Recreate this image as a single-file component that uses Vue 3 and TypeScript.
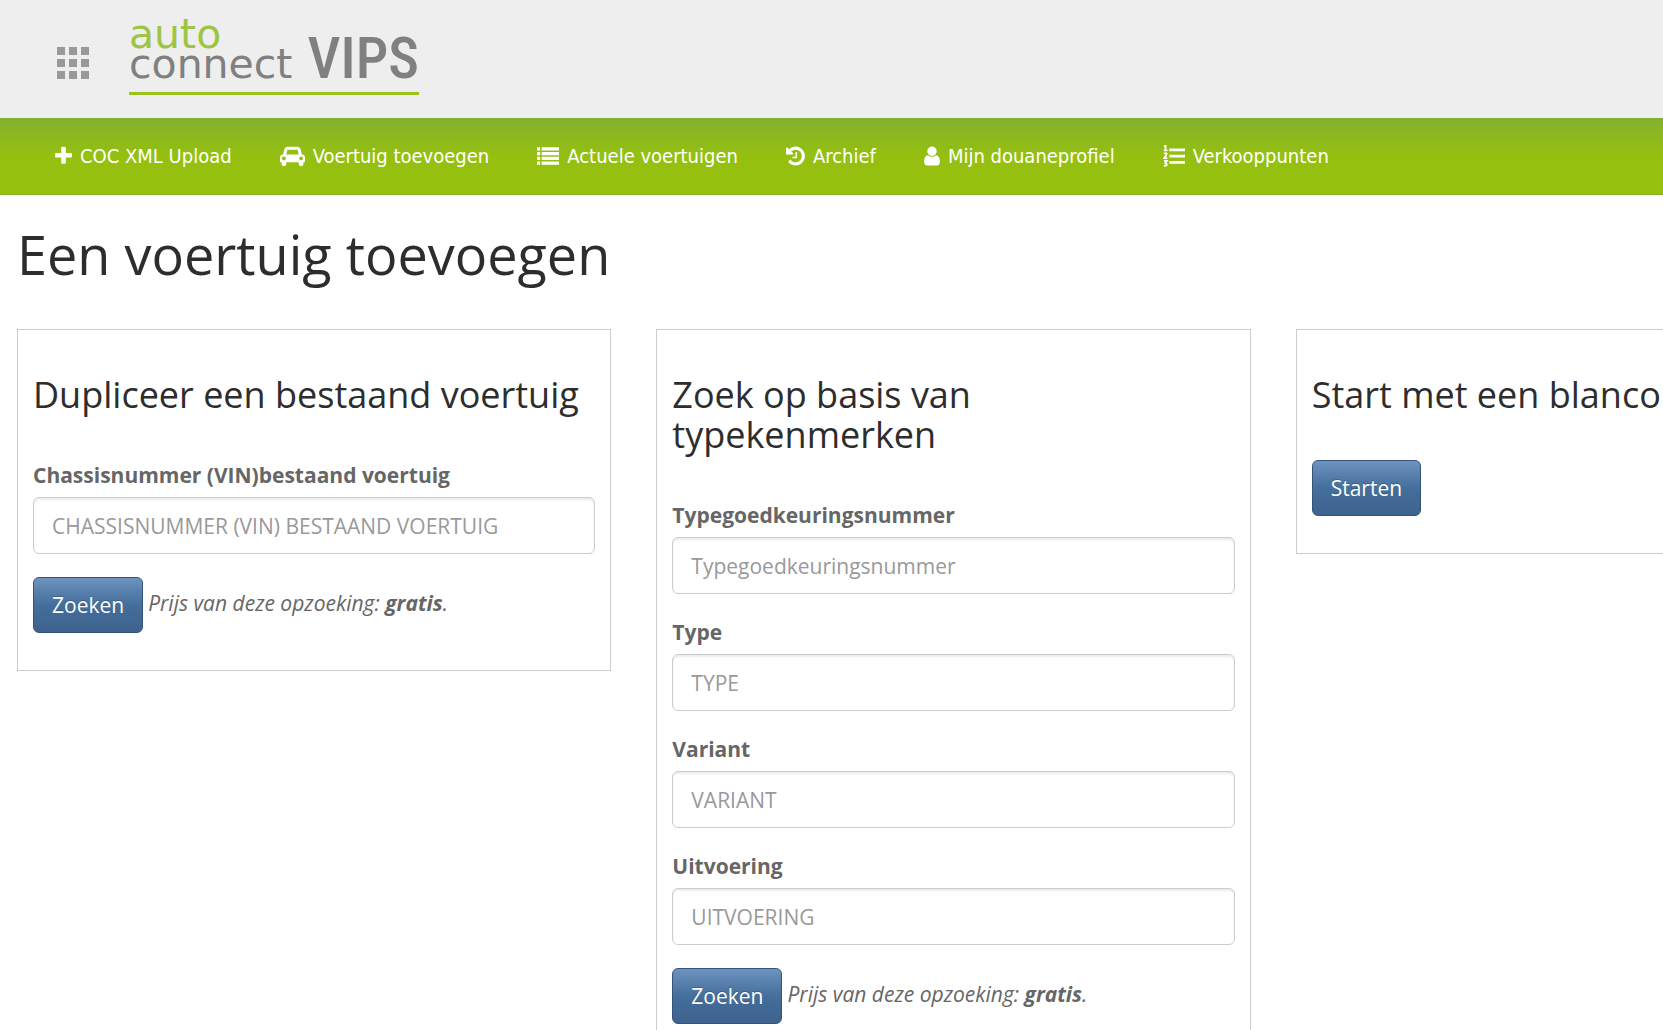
<script setup lang="ts">
import { ref } from 'vue'

interface NavItem {
  label: string
  icon: string
  width: number
  path: string
  outline?: string
}

interface Field {
  id: string
  label: string
  placeholder: string
}

const navItems: NavItem[] = [
  {
    label: 'COC XML Upload',
    icon: '192 0 1408 1792',
    width: 17,
    path: 'M1600 736v192q0 40-28 68t-68 28h-416v416q0 40-28 68t-68 28h-192q-40 0-68-28t-28-68v-416h-416q-40 0-68-28t-28-68v-192q0-40 28-68t68-28h416v-416q0-40 28-68t68-28h192q40 0 68 28t28 68v416h416q40 0 68 28t28 68z',
  },
  {
    label: 'Voertuig toevoegen',
    icon: '0 0 2048 1792',
    width: 25,
    path: 'M480 1088q0-66-47-113t-113-47-113 47-47 113 47 113 113 47 113-47 47-113zm36-320h1016l-89-357q-2-8-14-17.5t-21-9.5h-768q-9 0-21 9.5t-14 17.5zm1372 320q0-66-47-113t-113-47-113 47-47 113 47 113 113 47 113-47 47-113zm160-96v384q0 14-9 23t-23 9h-96v128q0 80-56 136t-136 56-136-56-56-136v-128h-1024v128q0 80-56 136t-136 56-136-56-56-136v-128h-96q-14 0-23-9t-9-23v-384q0-93 65.5-158.5t158.5-65.5h28l105-419q23-94 104-157.5t179-63.5h768q98 0 179 63.5t104 157.5l105 419h28q93 0 158.5 65.5t65.5 158.5z',
  },
  {
    label: 'Actuele voertuigen',
    icon: '0 0 1792 1792',
    width: 22,
    path: 'M0 192h256v256H0zM384 192h1408v256H384zM0 576h256v256H0zM384 576h1408v256H384zM0 960h256v256H0zM384 960h1408v256H384zM0 1344h256v256H0zM384 1344h1408v256H384z',
  },
  {
    label: 'Archief',
    icon: '128 0 1536 1792',
    width: 19,
    path: 'M1664 896q0 156-61 298t-164 245-245 164-298 61q-172 0-327-72.5t-264-204.5q-7-10-6.5-22.5t8.5-20.5l137-138q10-9 25-9 16 2 23 12 73 95 179 147t225 52q104 0 198.5-40.5t163.5-109.5 109.5-163.5 40.5-198.5-40.5-198.5-109.5-163.5-163.5-109.5-198.5-40.5q-98 0-188 35.5t-160 101.5l137 138q31 30 14 69-17 40-59 40h-448q-26 0-45-19t-19-45v-448q0-42 40-59 39-17 69 14l130 129q107-101 244.5-156.5t284.5-55.5q156 0 298 61t245 164 164 245 61 298zm-640-288v448q0 14-9 23t-23 9h-320q-14 0-23-9t-9-23v-64q0-14 9-23t23-9h224v-352q0-14 9-23t23-9h64q14 0 23 9t9 23z',
  },
  {
    label: 'Mijn douaneprofiel',
    icon: '256 0 1280 1792',
    width: 16,
    path: 'M1536 1399q0 109-62.5 187t-150.5 78h-854q-88 0-150.5-78t-62.5-187q0-85 8.5-160.5t31.5-152 58.5-131 94-89 134.5-34.5q131 128 313 128t313-128q76 0 134.5 34.5t94 89 58.5 131 31.5 152 8.5 160.5zm-256-887q0 159-112.5 271.5t-271.5 112.5-271.5-112.5-112.5-271.5 112.5-271.5 271.5-112.5 271.5 112.5 112.5 271.5z',
  },
  {
    label: 'Verkooppunten',
    icon: '0 0 1792 1792',
    width: 22,
    path: 'M512 288h1280v224H512zM512 800h1280v224H512zM512 1312h1280v224H512z',
    outline: 'M80 140L210 60V430M60 430H360M80 730Q200 610 300 700Q320 800 90 1070H350M80 1300H310L190 1450Q330 1480 310 1610Q240 1740 70 1660',
  },
]

const typeFields: Field[] = [
  { id: 'approval', label: 'Typegoedkeuringsnummer', placeholder: 'Typegoedkeuringsnummer' },
  { id: 'type', label: 'Type', placeholder: 'TYPE' },
  { id: 'variant', label: 'Variant', placeholder: 'VARIANT' },
  { id: 'version', label: 'Uitvoering', placeholder: 'UITVOERING' },
]

const vin = ref('')
const typeValues = ref<Record<string, string>>({})
</script>

<template>
  <header class="brand-bar">
    <button class="apps" type="button" aria-label="Apps">
      <span v-for="n in 9" :key="n" class="dot"></span>
    </button>
    <a class="logo" href="#">
      <span class="logo-name">
        <span class="logo-auto">auto</span>
        <span class="logo-connect">connect</span>
      </span>
      <span class="logo-product">VIPS</span>
    </a>
  </header>

  <nav class="nav">
    <a v-for="item in navItems" :key="item.label" class="nav-link" href="#">
      <svg :viewBox="item.icon" :width="item.width" height="22" fill="currentColor" aria-hidden="true">
        <path :d="item.path" />
        <path v-if="item.outline" :d="item.outline" fill="none" stroke="currentColor" stroke-width="140" />
      </svg>
      <span>{{ item.label }}</span>
    </a>
  </nav>

  <main class="page">
    <h1>Een voertuig toevoegen</h1>
    <div class="columns">
      <form class="panel" @submit.prevent>
        <h3>Dupliceer een bestaand voertuig</h3>
        <div class="field">
          <label for="vin">Chassisnummer (VIN)bestaand voertuig</label>
          <input id="vin" v-model="vin" type="text" placeholder="CHASSISNUMMER (VIN) BESTAAND VOERTUIG" />
        </div>
        <div class="actions">
          <button class="btn" type="submit">Zoeken</button>
          <em>Prijs van deze opzoeking: <strong>gratis</strong>.</em>
        </div>
      </form>

      <form class="panel" @submit.prevent>
        <h3>Zoek op basis van typekenmerken</h3>
        <div v-for="field in typeFields" :key="field.id" class="field">
          <label :for="field.id">{{ field.label }}</label>
          <input :id="field.id" v-model="typeValues[field.id]" type="text" :placeholder="field.placeholder" />
        </div>
        <div class="actions">
          <button class="btn" type="submit">Zoeken</button>
          <em>Prijs van deze opzoeking: <strong>gratis</strong>.</em>
        </div>
      </form>

      <form class="panel" @submit.prevent>
        <h3>Start met een blanco</h3>
        <div class="actions">
          <button class="btn" type="submit">Starten</button>
        </div>
      </form>
    </div>
  </main>
</template>

<style>
body {
  margin: 0;
  background: #fff;
  overflow: hidden;
}
</style>

<style scoped>
.brand-bar,
.nav,
.page {
  box-sizing: border-box;
  font-family: 'Open Sans', sans-serif;
  font-size: 21px;
  line-height: 30px;
  color: #666;
}

.brand-bar {
  display: flex;
  align-items: flex-start;
  gap: 40px;
  height: 118px;
  padding-left: 57px;
  background: #eee;
}

.apps {
  display: grid;
  grid-template-columns: repeat(3, 8px);
  gap: 4px;
  margin: 47px 0 0;
  padding: 0;
  border: 0;
  background: none;
}

.dot {
  height: 8px;
  background: #999;
}

.logo {
  display: flex;
  align-items: last baseline;
  justify-content: space-between;
  box-sizing: border-box;
  width: 290px;
  height: 95px;
  padding-bottom: 13px;
  border-bottom: 3px solid #9bc31c;
  color: #808080;
  text-decoration: none;
}

.logo-name {
  display: flex;
  flex-direction: column;
  font-family: 'DejaVu Sans', sans-serif;
  font-size: 41px;
  line-height: 30px;
}

.logo-auto {
  color: #9dc544;
}

.logo-product {
  font-family: 'Roboto Condensed', 'Liberation Sans Narrow', sans-serif;
  font-size: 58px;
  font-weight: 500;
  line-height: 30px;
}

.nav {
  display: flex;
  align-items: center;
  gap: 48px;
  height: 77px;
  padding-left: 55px;
  border-bottom: 1px solid #84ae2c;
  background: linear-gradient(#84b02e, #95c010 50%, #97c00e);
}

.nav-link {
  display: flex;
  align-items: center;
  gap: 8px;
  font-family: 'DejaVu Sans Condensed', 'Noto Sans', sans-serif;
  font-size: 20px;
  color: #fff;
  text-decoration: none;
  white-space: nowrap;
}

.page {
  padding: 30px 0 0 17px;
  overflow: hidden;
}

h1,
h3 {
  margin: 0;
  font-weight: 400;
  color: #2d2d2d;
}

h1 {
  margin-bottom: 45px;
  font-size: 54px;
  line-height: 59px;
}

h3 {
  margin: 45px 0;
  font-size: 36px;
  line-height: 40px;
}

/* The row is wider than the page: the third panel runs off the right edge. */
.columns {
  display: grid;
  grid-template-columns: repeat(3, minmax(0, 1fr));
  align-items: start;
  gap: 45px;
  margin-right: -227px;
}

.panel {
  padding: 0 15px 37px;
  border: 1px solid #ccc;
}

.field {
  margin-bottom: 23px;
}

.field label {
  display: block;
  margin-bottom: 7px;
  font-weight: 700;
}

.field input {
  display: block;
  box-sizing: border-box;
  width: 100%;
  height: 57px;
  padding: 0 18px;
  border: 1px solid #ccc;
  border-radius: 6px;
  box-shadow: inset 0 2px 2px rgba(0, 0, 0, 0.075);
  background: #fff;
  font: inherit;
  color: #555;
}

.field input::placeholder {
  color: #999;
  opacity: 1;
}

.btn {
  height: 56px;
  margin-right: 5px;
  padding: 0 18px;
  border: 1px solid #345578;
  border-radius: 6px;
  background: linear-gradient(#6e93c0, #446e9b 50%, #3f628e);
  font: inherit;
  color: #fff;
  text-shadow: 0 -1px 0 rgba(0, 0, 0, 0.2);
  vertical-align: middle;
}
</style>
